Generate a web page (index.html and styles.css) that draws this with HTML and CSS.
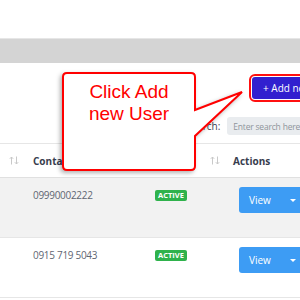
FILE: index.html
```html
<!DOCTYPE html>
<html>
<head>
<meta charset="utf-8">
<link rel="stylesheet" href="styles.css">
</head>
<body>
<div class="page">
  <div class="content">
    <div class="top-space"></div>
    <div class="band"></div>
    <div class="toolbar">
      <div class="tool-actions"><button class="btn-add" type="button">+ Add new User</button></div>
      <div class="search-row"><label class="search-label">Search:</label><input class="search-input" type="text" placeholder="Enter search here"></div>
    </div>
    <div class="table">
      <div class="tr thead">
        <div class="th th-end"><svg class="sort" width="10" height="9" viewBox="0 0 10 9"><path d="M2.5 8.5V1M0.8 2.8L2.5 1L4.2 2.8M7.5 0.5V8M5.8 6.2L7.5 8L9.2 6.2" fill="none" stroke="#c9c9c9" stroke-width="1"/></svg></div>
        <div class="th th-split"><span>Contact</span><svg class="sort" width="10" height="9" viewBox="0 0 10 9"><path d="M2.5 8.5V1M0.8 2.8L2.5 1L4.2 2.8M7.5 0.5V8M5.8 6.2L7.5 8L9.2 6.2" fill="none" stroke="#c9c9c9" stroke-width="1"/></svg></div>
        <div class="th th-split"><span>Status</span><svg class="sort" width="10" height="9" viewBox="0 0 10 9"><path d="M2.5 8.5V1M0.8 2.8L2.5 1L4.2 2.8M7.5 0.5V8M5.8 6.2L7.5 8L9.2 6.2" fill="none" stroke="#c9c9c9" stroke-width="1"/></svg></div>
        <div class="th">Actions</div>
      </div>
      <div class="tr row row-odd">
        <div class="td"></div>
        <div class="td td-text">09990002222</div>
        <div class="td td-status"><span class="badge">ACTIVE</span></div>
        <div class="td td-action"><div class="btn-view"><span class="btn-view-label">View</span><span class="caret"></span></div></div>
      </div>
      <div class="tr row">
        <div class="td"></div>
        <div class="td td-text">0915 719 5043</div>
        <div class="td td-status"><span class="badge">ACTIVE</span></div>
        <div class="td td-action"><div class="btn-view"><span class="btn-view-label">View</span><span class="caret"></span></div></div>
      </div>
    </div>
  </div>
  <div class="callout">
    <svg class="callout-shape" width="186" height="104" viewBox="0 0 186 104"><path d="M7 3H131Q135 3 135 7V40L182 22L135 66V96Q135 100 131 100H7Q3 100 3 96V7Q3 3 7 3Z" fill="#fff" stroke="#ff0000" stroke-width="2" stroke-linejoin="miter"/></svg>
    <div class="callout-text">Click Add<br>new User</div>
  </div>
</div>
</body>
</html>
```
FILE: styles.css
```css
* { box-sizing: border-box; }
html, body { margin: 0; padding: 0; background: #fff; overflow: hidden; }
body { font-family: "Open Sans", "Liberation Sans", sans-serif; }

.page { position: relative; width: 300px; height: 300px; overflow: hidden; }
.content { width: 360px; }

.top-space { height: 38px; }
.band { height: 25px; background: #d4d4d4; border-top: 1px solid #e6e6e6; }

.toolbar { padding: 14px 0 8px; border-bottom: 1px solid #e6e6e6; }
.tool-actions { display: flex; padding-left: 252px; }
.btn-add {
  font-family: "Open Sans", sans-serif; font-size: 10px; color: #fff;
  background: #3120cf; border: 0; border-radius: 3px; height: 22px;
  padding: 0 11px; outline: 2px solid #ff1010; outline-offset: 1px; white-space: nowrap;
}
.search-row { display: flex; align-items: center; gap: 7px; margin-top: 18px; padding-left: 186px; }
.search-label { font-size: 10px; color: #3b4151; }
.search-input {
  width: 130px; height: 18px; border: 0; border-radius: 3px; background: #e9ecef;
  padding: 0 6px; font-family: "Open Sans", sans-serif; font-size: 8.5px; letter-spacing: -0.2px; color: #555;
}
.search-input::placeholder { color: #8f959b; }

.tr { display: grid; grid-template-columns: 33px 122px 78px 1fr; }
.thead { height: 34px; border-bottom: 1px solid #e0e0e0; align-items: center; }
.th { font-size: 10px; font-weight: 700; color: #383d4e; display: flex; align-items: center; }
.th-end { justify-content: flex-end; padding-right: 14px; }
.th-split { justify-content: space-between; padding-right: 13px; }
.sort { display: block; }

.row { height: 60px; border-bottom: 1px solid #e6e6e6; align-items: start; }
.row-odd { background: #f2f2f2; }
.td { padding-top: 9px; }
.td-text { font-size: 10px; letter-spacing: -0.3px; line-height: 17px; color: #5f6673; }
.td-status { display: flex; }
.td-status .badge { margin-top: 3px; }
.badge {
  display: inline-block; height: 11px; line-height: 11px; padding: 0 3px; border-radius: 2px;
  background: #2fb24c; color: #fff; font-size: 7.5px; font-weight: 700;
}
.td-action { padding-left: 6px; }
.btn-view {
  display: flex; align-items: center; justify-content: space-between; width: 72px; height: 26px;
  background: #3d9cf4; border-radius: 3px; padding: 0 15px 0 10px;
}
.btn-view-label { color: #fff; font-size: 10px; }
.caret { width: 0; height: 0; border-left: 3px solid transparent; border-right: 3px solid transparent; border-top: 3px solid #fff; }

.callout { position: absolute; left: 60px; top: 70px; width: 186px; height: 104px; pointer-events: none; }
.callout-shape { display: block; overflow: visible; filter: drop-shadow(-2px 2px 2px rgba(0,0,0,0.3)); }
.callout-text {
  position: absolute; left: 3px; top: 11px; width: 132px; text-align: center;
  font-family: "Liberation Sans", Arial, sans-serif; font-size: 19px; line-height: 22px; color: #ff0000;
}
```
